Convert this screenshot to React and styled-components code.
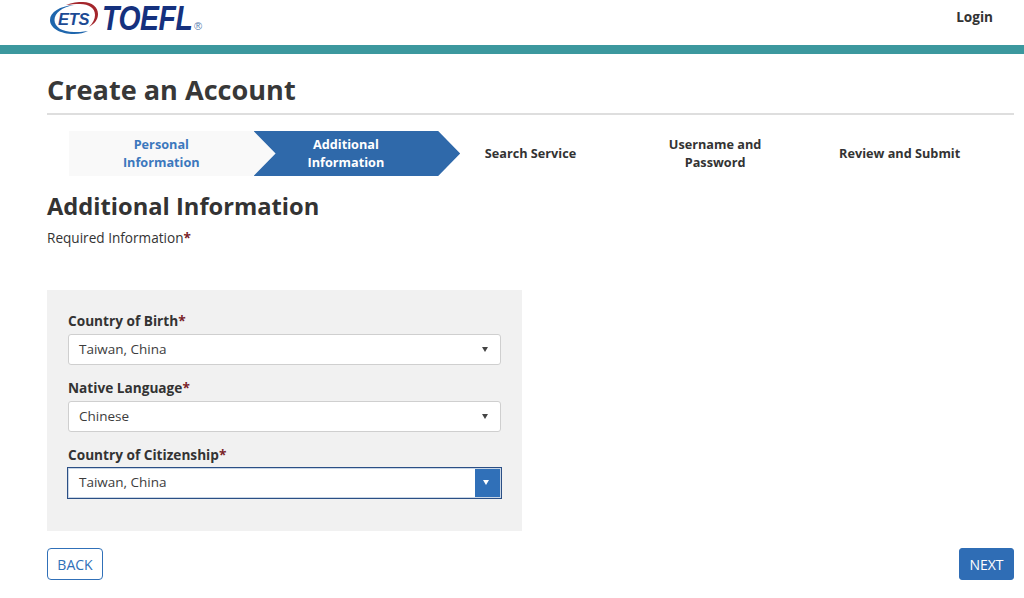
import React from 'react';
import styled, { createGlobalStyle } from 'styled-components';

const GlobalStyle = createGlobalStyle`
  html, body {
    margin: 0;
    padding: 0;
    background: #fff;
    font-family: "Open Sans", "Liberation Sans", sans-serif;
    color: #333;
  }
  * { box-sizing: border-box; }
`;

const steps = [
  { label: 'Personal\nInformation', state: 'done' },
  { label: 'Additional\nInformation', state: 'active' },
  { label: 'Search Service', state: 'todo' },
  { label: 'Username and\nPassword', state: 'todo' },
  { label: 'Review and Submit', state: 'todo' },
];

const fields = [
  { label: 'Country of Birth', value: 'Taiwan, China' },
  { label: 'Native Language', value: 'Chinese' },
  { label: 'Country of Citizenship', value: 'Taiwan, China', focused: true },
];

const Logo = () => (
  <LogoWrap>
    <svg width="49" height="32" viewBox="0 0 49 32">
      <path d="M24 3C10 4 0 10 0 18C0 26 10 32 24 32C30 32 34 31 38 29C32 30 28 30 24 30C12 30 4.500 25 4.500 18C4.500 11 12 5 24 3Z" fill="#1f66ad" />
      <path d="M16 3C22 0.500 28 0 33 0C42 0 48 5 48 12C48 18 44 22 39 25C43 21 45 17 45 13C45 6 39 2 30 2C25 2 20 2.500 16 3Z" fill="#a4262c" />
      <text x="8" y="22.500" fontFamily="Liberation Sans" fontStyle="italic" fontWeight="700" fontSize="16.500" fill="#1c4a94" letterSpacing="-0.300">ETS</text>
    </svg>
    <LogoWord>TOEFL</LogoWord>
    <LogoMark>®</LogoMark>
  </LogoWrap>
);

const App = () => (
  <>
    <GlobalStyle />
    <Header>
      <Logo />
      <LoginLink>Login</LoginLink>
    </Header>
    <TealBar />
    <Main>
      <PageTitle>Create an Account</PageTitle>
      <Stepper>
        {steps.map((step) => (
          <Step key={step.label} $state={step.state}>{step.label}</Step>
        ))}
      </Stepper>
      <SectionTitle>Additional Information</SectionTitle>
      <Required>Required Information<Star>*</Star></Required>
      <FormPanel>
        {fields.map((field) => (
          <Field key={field.label}>
            <FieldLabel>{field.label}<Star>*</Star></FieldLabel>
            <SelectBox $focused={field.focused}>
              <SelectValue>{field.value}</SelectValue>
              <SelectArrow $focused={field.focused} />
            </SelectBox>
          </Field>
        ))}
      </FormPanel>
      <Actions>
        <BackButton>BACK</BackButton>
        <NextButton>NEXT</NextButton>
      </Actions>
    </Main>
  </>
);

export default App;

const Header = styled.header`
  height: 45px;
  padding: 2px 31px 0 50px;
  display: flex;
  justify-content: space-between;
  align-items: flex-start;
`;

const LogoWrap = styled.div`
  display: flex;
  align-items: flex-start;
  height: 32px;
`;

const LogoWord = styled.span`
  display: block;
  width: 92px;
  margin-left: 3px;
  font-family: "Liberation Sans", sans-serif;
  font-style: italic;
  font-weight: 700;
  font-size: 35px;
  line-height: 32px;
  letter-spacing: -0.500px;
  color: #15317e;
  transform: scaleX(0.81);
  transform-origin: left center;
`;

const LogoMark = styled.span`
  margin-top: 19px;
  font-family: "Liberation Sans", sans-serif;
  font-size: 11px;
  line-height: 11px;
  color: #5a7fb0;
`;

const LoginLink = styled.a`
  font-size: 13.600px;
  line-height: 30px;
  font-weight: 700;
  color: #333;
`;

const TealBar = styled.div`
  height: 9px;
  background: #3c989e;
`;

const Main = styled.main`
  padding: 0 10px 0 47px;
`;

const PageTitle = styled.h1`
  margin: 0;
  height: 61px;
  padding-top: 17px;
  font-size: 27.100px;
  line-height: 38px;
  font-weight: 700;
  color: #383838;
  border-bottom: 2px solid #dedede;
`;

const Stepper = styled.div`
  display: grid;
  grid-template-columns: repeat(5, 184.600px);
  margin: 16px 0 0 22px;
  height: 45px;
  isolation: isolate;
`;

const Step = styled.div`
  position: relative;
  display: flex;
  align-items: center;
  justify-content: center;
  padding-bottom: 1px;
  text-align: center;
  white-space: pre-line;
  font-size: 12.700px;
  line-height: 18px;
  font-weight: 700;
  color: ${({ $state }) => ($state === 'active' ? '#fff' : $state === 'done' ? '#3c78bd' : '#333')};

  &::before {
    content: '';
    position: absolute;
    z-index: -1;
    top: 0;
    bottom: 0;
    left: 0;
    right: -22px;
    display: ${({ $state }) => ($state === 'todo' ? 'none' : 'block')};
    background: ${({ $state }) => ($state === 'active' ? '#2f69aa' : '#f9f9f9')};
    clip-path: ${({ $state }) =>
      $state === 'active'
        ? 'polygon(0 0, calc(100% - 22px) 0, 100% 50%, calc(100% - 22px) 100%, 0 100%, 22px 50%)'
        : 'polygon(0 0, calc(100% - 22px) 0, 100% 50%, calc(100% - 22px) 100%, 0 100%)'};
  }
`;

const SectionTitle = styled.h2`
  margin: 14px 0 0;
  font-size: 23.700px;
  line-height: 33px;
  font-weight: 700;
  color: #333;
`;

const Required = styled.p`
  margin: 6px 0 0;
  font-size: 13.600px;
  line-height: 18px;
  color: #333;
`;

const Star = styled.span`
  color: #7a2328;
  font-weight: 700;
`;

const FormPanel = styled.section`
  width: 475px;
  height: 241px;
  margin-top: 43px;
  padding: 21px 21px 0;
  background: #f1f1f1;
`;

const Field = styled.div`
  margin-bottom: 13px;
`;

const FieldLabel = styled.label`
  display: block;
  font-size: 13.650px;
  line-height: 19px;
  font-weight: 700;
  color: #333;
  margin-bottom: 4px;
`;

const SelectBox = styled.div`
  position: relative;
  width: ${({ $focused }) => ($focused ? '435px' : '433px')};
  height: ${({ $focused }) => ($focused ? '32px' : '31px')};
  margin: ${({ $focused }) => ($focused ? '-1px 0 0 -1px' : '0')};
  display: flex;
  align-items: center;
  padding: ${({ $focused }) => ($focused ? '0 0 2px 11px' : '0 0 2px 10px')};
  background: #fff;
  border: 1px solid ${({ $focused }) => ($focused ? '#2b4f85' : '#cfcfcf')};
  border-radius: ${({ $focused }) => ($focused ? '0' : '3px')};
  box-shadow: ${({ $focused }) => ($focused ? 'inset 0 0 0 1px #c9d6e6' : 'none')};
`;

const SelectValue = styled.span`
  font-size: 13.500px;
  color: #3c3c3c;
`;

const SelectArrow = styled.span`
  position: absolute;
  top: 1px;
  bottom: 1px;
  right: 1px;
  width: 25px;
  background: ${({ $focused }) => ($focused ? '#3070b8' : 'transparent')};

  &::after {
    content: '';
    position: absolute;
    top: 11px;
    left: 8px;
    border-style: solid;
    border-width: 5px 3.500px 0;
    border-color: ${({ $focused }) => ($focused ? '#fff' : '#444')} transparent transparent;
  }
`;

const Actions = styled.div`
  display: flex;
  justify-content: space-between;
  margin-top: 17px;
`;

const BackButton = styled.button`
  width: 56px;
  height: 32px;
  padding: 0;
  background: #fff;
  border: 1px solid #3070b8;
  border-radius: 4px;
  color: #3070b8;
  font-family: inherit;
  font-size: 14px;
`;

const NextButton = styled.button`
  width: 55px;
  height: 32px;
  padding: 0;
  background: #2f6db5;
  border: 1px solid #2f6db5;
  border-radius: 3px;
  color: #fff;
  font-family: inherit;
  font-size: 14px;
`;
